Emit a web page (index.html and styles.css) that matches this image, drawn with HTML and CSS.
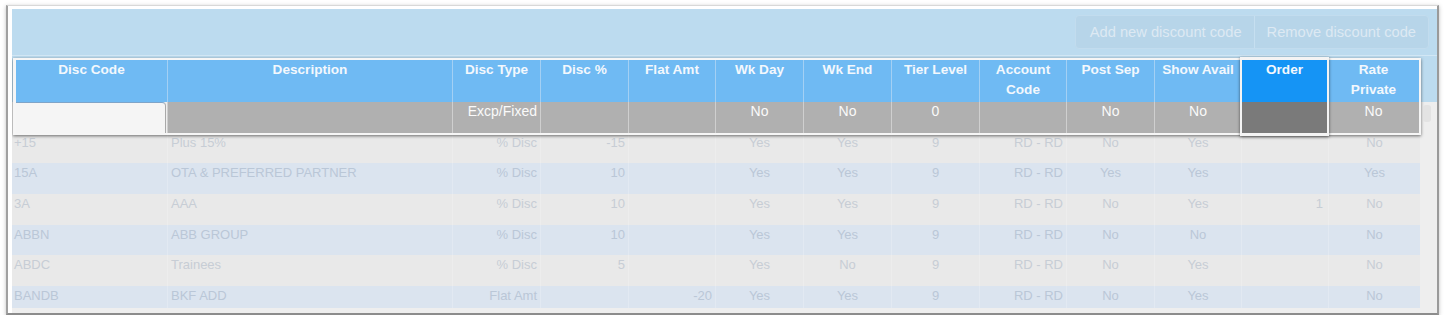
FILE: index.html
```html
<!DOCTYPE html>
<html>
<head>
<meta charset="utf-8">
<link rel="stylesheet" href="styles.css">
</head>
<body>
<div class="window">
  <div class="content">
    <div class="toolbar">
      <div class="btngroup">
        <div class="btn first">Add new discount code</div>
        <div class="btn">Remove discount code</div>
      </div>
    </div>
    <div class="headwrap">
      <div class="overlay">
        <div class="col w151"><div class="hc">Disc Code</div><div class="fc input"></div></div>
        <div class="col w285 dv"><div class="hc">Description</div><div class="fc"></div></div>
        <div class="col w88 dv"><div class="hc">Disc Type</div><div class="fc r">Excp/Fixed</div></div>
        <div class="col w88 dv"><div class="hc">Disc %</div><div class="fc"></div></div>
        <div class="col w87 dv"><div class="hc">Flat Amt</div><div class="fc"></div></div>
        <div class="col w88 dv"><div class="hc">Wk Day</div><div class="fc c">No</div></div>
        <div class="col w88 dv"><div class="hc">Wk End</div><div class="fc c">No</div></div>
        <div class="col w88 dv"><div class="hc">Tier Level</div><div class="fc c">0</div></div>
        <div class="col w87 dv"><div class="hc">Account<br>Code</div><div class="fc"></div></div>
        <div class="col w88 dv"><div class="hc">Post Sep</div><div class="fc c">No</div></div>
        <div class="col w87 dv"><div class="hc">Show Avail</div><div class="fc c">No</div></div>
        <div class="col order"><div class="hc">Order</div><div class="fc"></div></div>
        <div class="col w91"><div class="hc">Rate<br>Private</div><div class="fc c">No</div></div>
      </div>
      <div class="gutter"><div class="thumb"></div></div>
    </div>
    <div class="viewport">
      <div class="row odd">
        <div class="l">+15</div><div class="l">Plus 15%</div><div class="r">% Disc</div><div class="r">-15</div><div class="r"></div><div class="c">Yes</div><div class="c">Yes</div><div class="c">9</div><div class="r">RD - RD</div><div class="c">No</div><div class="c">Yes</div><div class="r"></div><div class="c">No</div>
      </div>
      <div class="row even">
        <div class="l">15A</div><div class="l">OTA &amp; PREFERRED PARTNER</div><div class="r">% Disc</div><div class="r">10</div><div class="r"></div><div class="c">Yes</div><div class="c">Yes</div><div class="c">9</div><div class="r">RD - RD</div><div class="c">Yes</div><div class="c">Yes</div><div class="r"></div><div class="c">Yes</div>
      </div>
      <div class="row odd">
        <div class="l">3A</div><div class="l">AAA</div><div class="r">% Disc</div><div class="r">10</div><div class="r"></div><div class="c">Yes</div><div class="c">Yes</div><div class="c">9</div><div class="r">RD - RD</div><div class="c">No</div><div class="c">Yes</div><div class="r">1</div><div class="c">No</div>
      </div>
      <div class="row even">
        <div class="l">ABBN</div><div class="l">ABB GROUP</div><div class="r">% Disc</div><div class="r">10</div><div class="r"></div><div class="c">Yes</div><div class="c">Yes</div><div class="c">9</div><div class="r">RD - RD</div><div class="c">No</div><div class="c">No</div><div class="r"></div><div class="c">No</div>
      </div>
      <div class="row odd">
        <div class="l">ABDC</div><div class="l">Trainees</div><div class="r">% Disc</div><div class="r">5</div><div class="r"></div><div class="c">Yes</div><div class="c">No</div><div class="c">9</div><div class="r">RD - RD</div><div class="c">No</div><div class="c">Yes</div><div class="r"></div><div class="c">No</div>
      </div>
      <div class="row even">
        <div class="l">BANDB</div><div class="l">BKF ADD</div><div class="r">Flat Amt</div><div class="r"></div><div class="r">-20</div><div class="c">Yes</div><div class="c">Yes</div><div class="c">9</div><div class="r">RD - RD</div><div class="c">No</div><div class="c">Yes</div><div class="r"></div><div class="c">No</div>
      </div>
    </div>
  </div>
</div>
</body>
</html>
```
FILE: styles.css
```css
* { box-sizing: border-box; }
html, body { margin: 0; padding: 0; background: #ffffff; }
body { font-family: "Liberation Sans", Arial, sans-serif; }

.window {
  margin: 5px 0 0 6px;
  width: 1433px;
  background: #ffffff;
  border-top: 1px solid #d8d8d8;
  border-left: 2px solid #a0a0a0;
  border-right: 2px solid #9a9a9a;
  border-bottom: 2px solid #8c8c8c;
  padding: 3px 0 0 4px;
  box-shadow: 0 1px 4px rgba(0,0,0,0.25);
}

.content {
  width: 1425px;
  height: 304px;
  background: #eeeeee;
  overflow: hidden;
}

.toolbar {
  height: 46px;
  background: #bcdbef;
  display: flex;
  justify-content: flex-end;
  padding: 6px 8px 0 0;
}
.btngroup {
  display: flex;
  height: 34px;
  background: #b7d5e9;
  border: 1px solid #c2dcee;
  border-radius: 4px;
}
.btn {
  padding: 0 12px;
  line-height: 32px;
  font-size: 14.7px;
  color: #dde9f3;
  white-space: nowrap;
}
.btn.first { padding-left: 14px; padding-right: 12px; border-right: 1px solid #c6dff0; }

.headwrap {
  display: flex;
  border-top: 1px solid #d2e7f5;
  padding-top: 2px;
  margin-bottom: -2.4px;
  background: linear-gradient(#bcdbef 0, #bcdbef 46px, #eeeeee 46px);
  position: relative;
  z-index: 2;
}
.overlay {
  margin-left: 1px;
  display: flex;
  border-top: 2px solid #f6f6f6;
  border-left: 3px solid #f6f6f6;
  border-right: 2px solid #f6f6f6;
  border-bottom: 2px solid #f6f6f6;
  box-shadow: 0 1px 3px rgba(0,0,0,0.55);
}
.gutter { flex: 1; padding: 47px 6px 0 2px; }
.thumb { height: 17px; background: #e3e3e3; border-radius: 3px; }

.col { display: flex; flex-direction: column; flex: none; }
.w151 { width: 151px; }
.w285 { width: 285px; }
.w88 { width: 88px; }
.w87 { width: 87px; }
.w91 { width: 91px; }

.hc {
  height: 42px;
  background: #6fbaf3;
  color: #f3f8fd;
  font-size: 13.6px;
  font-weight: bold;
  line-height: 20px;
  text-align: center;
  padding: 0 1px;
  white-space: nowrap;
}
.fc {
  height: 31px;
  background: #b0b0b0;
  color: #fafafa;
  font-size: 14px;
  line-height: 18px;
  padding: 0 3px;
  white-space: nowrap;
}
.dv .hc { border-left: 1px solid #a3d0f4; }
.dv .fc { border-left: 1px solid #cfcfcf; }
.fc.input {
  background: #f5f5f5;
  border-top: 1px solid #7fa4c8;
  border-right: 1px solid #a9a9a9;
  border-top-right-radius: 4px;
  margin-right: 1px;
}

.col.order {
  width: 89px;
  margin: -3px -1px -3px -1px;
  border: 2px solid #f4f4f4;
  border-top-width: 3px;
  border-bottom-width: 3px;
  box-shadow: 0 1px 3px rgba(0,0,0,0.55);
  position: relative;
  z-index: 3;
}
.col.order .hc { background: #1594f5; }
.col.order .fc { background: #7a7a7a; }

.r { text-align: right; }
.c { text-align: center; }
.l { text-align: left; }

.viewport {
  width: 1408px;
  height: 175px;
  overflow: hidden;
}
.row {
  display: grid;
  grid-template-columns: 155px 285px 88px 88px 87px 88px 88px 88px 87px 88px 87px 87px 92px;
  height: 30.7px;
  font-size: 13px;
  line-height: 19px;
}
.row > div {
  padding: 0 3px;
  white-space: nowrap;
  border-left: 1px solid rgba(255,255,255,0.2);
}
.row > div:first-child { border-left: none; padding-left: 2px; }
.row > div:nth-child(12) { padding-right: 5px; }
.row.odd { background: #e9e9e9; color: #c7cdd5; }
.row.even { background: #dbe4ef; color: #bac7d7; }
```
